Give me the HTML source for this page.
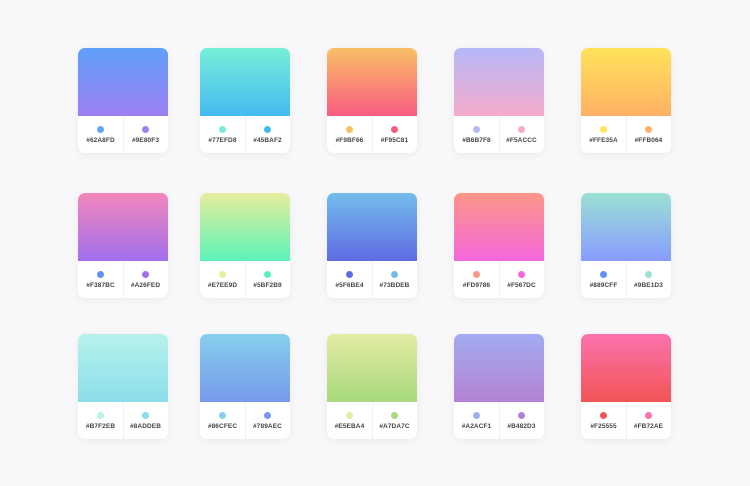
<!DOCTYPE html>
<html><head><style>
body{margin:0;width:750px;height:486px;background:#f8f8fa;font-family:"Liberation Sans",sans-serif;position:relative;overflow:hidden}
.c{position:absolute;width:90px;height:105px;border-radius:7px;background:#fff;box-shadow:0 2px 8px rgba(0,0,0,0.06);overflow:hidden}
.g{height:68px}
.b{display:flex;height:37px;position:relative}
.b:after{content:"";position:absolute;left:45px;top:0;bottom:0;width:1px;background:#f0f0f2}
.h{flex:1;text-align:center}
.d{width:7px;height:7px;border-radius:50%;margin:10px auto 4px}
.t{font-size:6.5px;font-weight:bold;color:#444;letter-spacing:0.1px}
</style></head><body>
<div id="r"></div>
<script>
var xs=[78,200,327,454,581],ys=[48,193,334];
var d=[
[["#5FA0FB","#9E80F3","#62A8FD","#9E80F3","#62A8FD","#9E80F3"],["#77EFD8","#45BAF2","#77EFD8","#45BAF2","#77EFD8","#45BAF2"],["#F9BF66","#F95C81","#F9BF66","#F95C81","#F9BF66","#F95C81"],["#B6B7F8","#F5ACCC","#B6B7F8","#F5ACCC","#B6B7F8","#F5ACCC"],["#FFE35A","#FFB064","#FFE35A","#FFB064","#FFE35A","#FFB064"]],
[["#F387BC","#A26FED","#5F93F0","#A26FED","#F387BC","#A26FED"],["#E7EE9D","#5BF2B9","#E7EE9D","#5BF2B9","#E7EE9D","#5BF2B9"],["#73BDEB","#5F6BE4","#5F6BE4","#73BDEB","#5F6BE4","#73BDEB"],["#FD9786","#F567DC","#FD9786","#F567DC","#FD9786","#F567DC"],["#9BE1D3","#889CFF","#5F93F0","#9BE1D3","#889CFF","#9BE1D3"]],
[["#B7F2EB","#8ADDEB","#B7F2EB","#8ADDEB","#B7F2EB","#8ADDEB"],["#86CFEC","#789AEC","#86CFEC","#789AEC","#86CFEC","#789AEC"],["#E5EBA4","#A7DA7C","#E5EBA4","#A7DA7C","#E5EBA4","#A7DA7C"],["#A2ACF1","#B482D3","#A2ACF1","#B482D3","#A2ACF1","#B482D3"],["#FB72AE","#F25555","#F25555","#FB72AE","#F25555","#FB72AE"]]];
var h="";
for(var r=0;r<3;r++)for(var c=0;c<5;c++){var e=d[r][c];
h+='<div class="c" style="left:'+xs[c]+'px;top:'+ys[r]+'px"><div class="g" style="background:linear-gradient('+e[0]+','+e[1]+')"></div><div class="b"><div class="h"><div class="d" style="background:'+e[2]+'"></div><div class="t">'+e[4]+'</div></div><div class="h"><div class="d" style="background:'+e[3]+'"></div><div class="t">'+e[5]+'</div></div></div></div>';}
document.getElementById("r").innerHTML=h;
</script>
</body></html>
